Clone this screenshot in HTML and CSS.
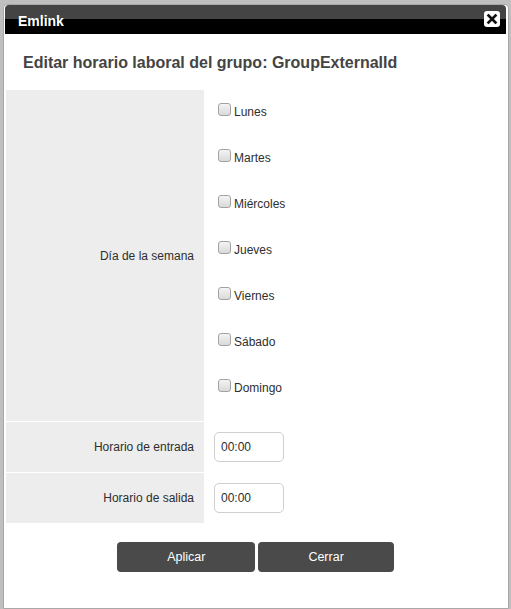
FILE: index.html
```html
<!DOCTYPE html>
<html lang="es">
<head>
<meta charset="utf-8">
<title>Emlink</title>
<link rel="stylesheet" href="styles.css">
</head>
<body>
<div class="dialog">
  <div class="titlebar">
    <span class="title">Emlink</span>
    <button class="close" type="button" aria-label="Cerrar">
      <svg width="16" height="16" viewBox="0 0 16 16"><rect x="0" y="0" width="16" height="16" rx="3" fill="#fff"/><path d="M4.5 4.5 L11.5 11.5 M11.5 4.5 L4.5 11.5" stroke="#111" stroke-width="2.6" stroke-linecap="square"/></svg>
    </button>
  </div>
  <h2 class="heading">Editar horario laboral del grupo: GroupExternalId</h2>
  <div class="form">
    <div class="label">Día de la semana</div>
    <div class="field days">
      <label class="day"><input type="checkbox"><span>Lunes</span></label>
      <label class="day"><input type="checkbox"><span>Martes</span></label>
      <label class="day"><input type="checkbox"><span>Miércoles</span></label>
      <label class="day"><input type="checkbox"><span>Jueves</span></label>
      <label class="day"><input type="checkbox"><span>Viernes</span></label>
      <label class="day"><input type="checkbox"><span>Sábado</span></label>
      <label class="day"><input type="checkbox"><span>Domingo</span></label>
    </div>
    <div class="label">Horario de entrada</div>
    <div class="field time-field"><input class="time" type="text" value="00:00"></div>
    <div class="label">Horario de salida</div>
    <div class="field time-field"><input class="time" type="text" value="00:00"></div>
  </div>
  <div class="actions">
    <button class="btn" type="button">Aplicar</button>
    <button class="btn" type="button">Cerrar</button>
  </div>
</div>
</body>
</html>
```

FILE: styles.css
```css
html, body {
  margin: 0;
  padding: 0;
}
body {
  background: #bfbfbf;
  font-family: "Liberation Sans", Arial, sans-serif;
  font-size: 12px;
  color: #2e2e2e;
  padding: 4px 0 0 3px;
  height: 609px;
  box-sizing: border-box;
  overflow: hidden;
}
.dialog {
  width: 506px;
  height: 605px;
  box-sizing: border-box;
  background: #fff;
  border: 1px solid #a8a8a8;
  border-radius: 4px 4px 0 0;
  padding: 0 2px 0 1px;
}
.titlebar {
  height: 29px;
  background: linear-gradient(#444 0, #444 50%, #000 50%, #000 100%);
  border-radius: 4px 4px 0 0;
  display: flex;
  align-items: center;
  justify-content: space-between;
  padding: 0 6px 0 13px;
  box-sizing: border-box;
}
.title {
  color: #fff;
  font-weight: bold;
  font-size: 14px;
  margin-top: 3px;
}
.close {
  border: 0;
  padding: 0;
  margin: 0;
  width: 16px;
  height: 16px;
  background: none;
  display: block;
  margin-bottom: 2px;
}
.close svg { display: block; }
.heading {
  margin: 20px 0 18px 18px;
  font-size: 16px;
  line-height: 18px;
  font-weight: bold;
  color: #444;
}
.form {
  margin-left: 1px;
  display: grid;
  grid-template-columns: 198px 1fr;
  row-gap: 1px;
}
.label {
  background: #ededed;
  display: flex;
  align-items: center;
  justify-content: flex-end;
  padding-right: 10px;
}
.days {
  display: flex;
  flex-direction: column;
  gap: 30px;
  padding: 13px 0 26px 14px;
}
.day {
  display: flex;
  align-items: flex-start;
  gap: 3px;
  height: 16px;
}
.day input {
  appearance: none;
  -webkit-appearance: none;
  width: 13px;
  height: 13px;
  margin: 0;
  border: 1px solid #a3a3a3;
  border-radius: 3px;
  background: linear-gradient(#f4f4f4, #d9d9d9);
  box-sizing: border-box;
}
.day span {
  line-height: 14px;
  margin-top: 2px;
}
.time-field {
  padding: 10px 10px 10px 10px;
}
.time {
  display: block;
  width: 70px;
  height: 30px;
  box-sizing: border-box;
  border: 1px solid #cfcfcf;
  border-radius: 5px;
  padding: 0 6px;
  font-family: "Liberation Sans", Arial, sans-serif;
  font-size: 12px;
  color: #2e2e2e;
  background: #fff;
}
.actions {
  display: flex;
  justify-content: center;
  gap: 3px;
  margin-top: 19px;
}
.btn {
  height: 30px;
  padding: 0 50px;
  border: 0;
  border-radius: 4px;
  background: #4a4a4a;
  color: #fff;
  font-family: "Liberation Sans", Arial, sans-serif;
  font-size: 12.5px;
}
```
